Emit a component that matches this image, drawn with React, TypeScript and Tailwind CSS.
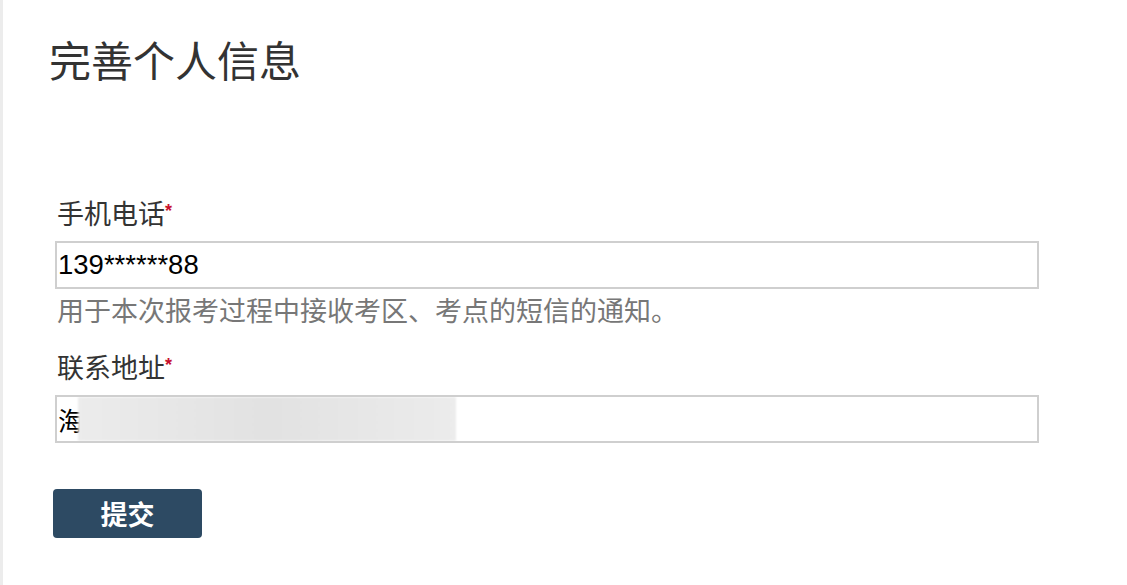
import React from "react";

const cjk = "font-['Noto_Sans_CJK_SC',sans-serif]";

function Label({ text }: { text: string }) {
  return (
    <div className={`${cjk} text-[27px] leading-[30px] text-[#333] flex items-start pl-[2px]`}>
      <span>{text}</span>
      <span className="text-[#c8102e] text-[18px] leading-[18px] font-bold mt-[4px] font-['Liberation_Sans',sans-serif]">*</span>
    </div>
  );
}

export default function App() {
  return (
    <main className="w-[1127px] h-[585px] bg-white overflow-hidden">
      <div className="h-full border-l-[3px] border-[#ececec] pl-[52px]">
        <h1 className={`${cjk} text-[42px] leading-none text-[#333] font-normal pt-[38px] -ml-[6px]`}>
          完善个人信息
        </h1>

        <form className="w-[984px] mt-[118px] flex flex-col" onSubmit={(e) => e.preventDefault()}>
          <Label text="手机电话" />
          <input
            readOnly
            value="139******88"
            className="mt-[13px] h-[48px] border-2 border-[#cfcfcf] px-[1px] text-[27.5px] text-black font-['Liberation_Sans',sans-serif] outline-none"
          />
          <p className={`${cjk} text-[27px] leading-[34px] text-[#777] mt-[4px] pl-[2px]`}>
            用于本次报考过程中接收考区、考点的短信的通知。
          </p>

          <div className="mt-[25px]">
            <Label text="联系地址" />
          </div>
          <div className="relative mt-[13px] h-[48px] border-2 border-[#cfcfcf] flex items-center px-[1px] overflow-hidden">
            <span className={`${cjk} text-[26px] text-black`}>海</span>
            <div className="absolute left-[21px] top-0 bottom-0 w-[378px] bg-gradient-to-r from-[#ececec] via-[#e2e2e2] to-[#ececec] blur-[1px]" />
          </div>

          <button
            type="submit"
            className={`${cjk} mt-[46px] -ml-[2px] w-[149px] h-[49px] rounded-[4px] bg-[#2d4a63] text-white text-[27px] leading-none font-bold`}
          >
            提交
          </button>
        </form>
      </div>
    </main>
  );
}
